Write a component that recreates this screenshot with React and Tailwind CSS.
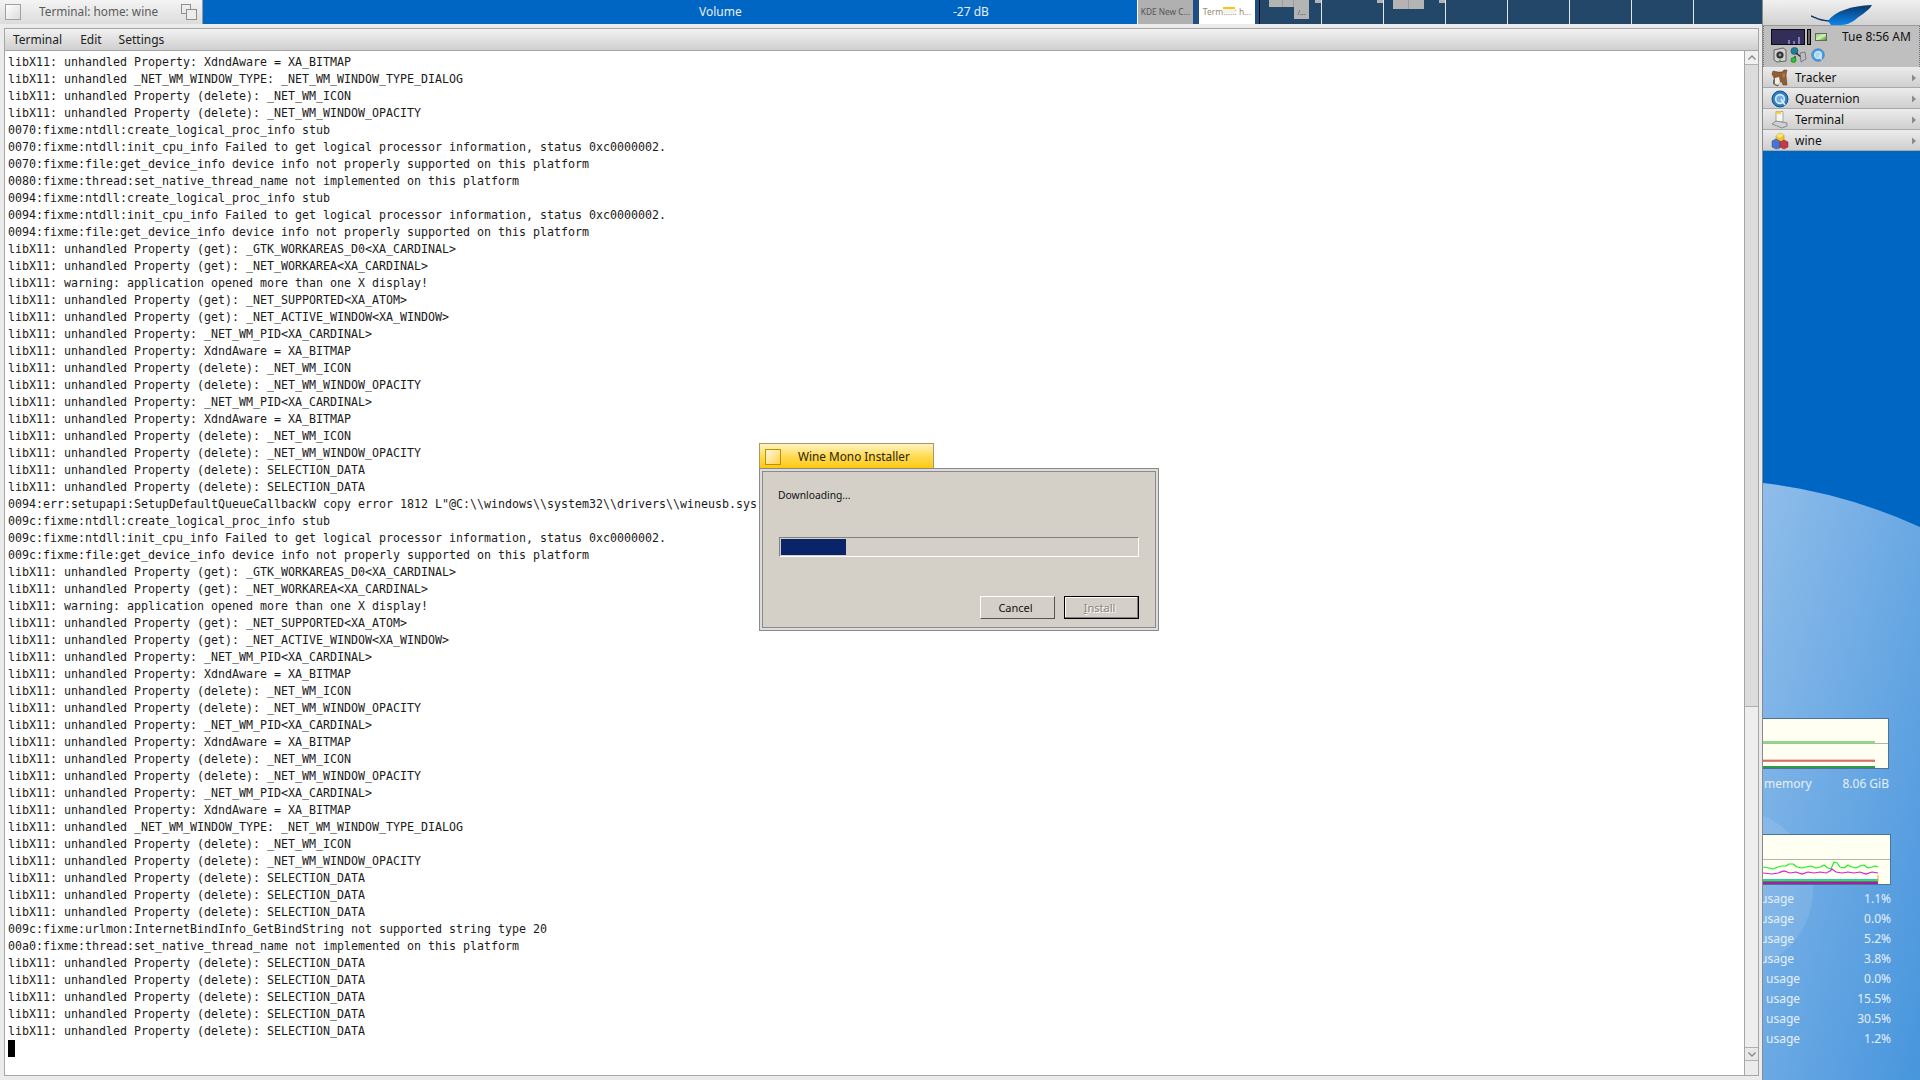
import React from "react";

const LOG = [
  "libX11: unhandled Property: XdndAware = XA_BITMAP",
  "libX11: unhandled _NET_WM_WINDOW_TYPE: _NET_WM_WINDOW_TYPE_DIALOG",
  "libX11: unhandled Property (delete): _NET_WM_ICON",
  "libX11: unhandled Property (delete): _NET_WM_WINDOW_OPACITY",
  "0070:fixme:ntdll:create_logical_proc_info stub",
  "0070:fixme:ntdll:init_cpu_info Failed to get logical processor information, status 0xc0000002.",
  "0070:fixme:file:get_device_info device info not properly supported on this platform",
  "0080:fixme:thread:set_native_thread_name not implemented on this platform",
  "0094:fixme:ntdll:create_logical_proc_info stub",
  "0094:fixme:ntdll:init_cpu_info Failed to get logical processor information, status 0xc0000002.",
  "0094:fixme:file:get_device_info device info not properly supported on this platform",
  "libX11: unhandled Property (get): _GTK_WORKAREAS_D0<XA_CARDINAL>",
  "libX11: unhandled Property (get): _NET_WORKAREA<XA_CARDINAL>",
  "libX11: warning: application opened more than one X display!",
  "libX11: unhandled Property (get): _NET_SUPPORTED<XA_ATOM>",
  "libX11: unhandled Property (get): _NET_ACTIVE_WINDOW<XA_WINDOW>",
  "libX11: unhandled Property: _NET_WM_PID<XA_CARDINAL>",
  "libX11: unhandled Property: XdndAware = XA_BITMAP",
  "libX11: unhandled Property (delete): _NET_WM_ICON",
  "libX11: unhandled Property (delete): _NET_WM_WINDOW_OPACITY",
  "libX11: unhandled Property: _NET_WM_PID<XA_CARDINAL>",
  "libX11: unhandled Property: XdndAware = XA_BITMAP",
  "libX11: unhandled Property (delete): _NET_WM_ICON",
  "libX11: unhandled Property (delete): _NET_WM_WINDOW_OPACITY",
  "libX11: unhandled Property (delete): SELECTION_DATA",
  "libX11: unhandled Property (delete): SELECTION_DATA",
  '0094:err:setupapi:SetupDefaultQueueCallbackW copy error 1812 L"@C:\\\\windows\\\\system32\\\\drivers\\\\wineusb.sys',
  "009c:fixme:ntdll:create_logical_proc_info stub",
  "009c:fixme:ntdll:init_cpu_info Failed to get logical processor information, status 0xc0000002.",
  "009c:fixme:file:get_device_info device info not properly supported on this platform",
  "libX11: unhandled Property (get): _GTK_WORKAREAS_D0<XA_CARDINAL>",
  "libX11: unhandled Property (get): _NET_WORKAREA<XA_CARDINAL>",
  "libX11: warning: application opened more than one X display!",
  "libX11: unhandled Property (get): _NET_SUPPORTED<XA_ATOM>",
  "libX11: unhandled Property (get): _NET_ACTIVE_WINDOW<XA_WINDOW>",
  "libX11: unhandled Property: _NET_WM_PID<XA_CARDINAL>",
  "libX11: unhandled Property: XdndAware = XA_BITMAP",
  "libX11: unhandled Property (delete): _NET_WM_ICON",
  "libX11: unhandled Property (delete): _NET_WM_WINDOW_OPACITY",
  "libX11: unhandled Property: _NET_WM_PID<XA_CARDINAL>",
  "libX11: unhandled Property: XdndAware = XA_BITMAP",
  "libX11: unhandled Property (delete): _NET_WM_ICON",
  "libX11: unhandled Property (delete): _NET_WM_WINDOW_OPACITY",
  "libX11: unhandled Property: _NET_WM_PID<XA_CARDINAL>",
  "libX11: unhandled Property: XdndAware = XA_BITMAP",
  "libX11: unhandled _NET_WM_WINDOW_TYPE: _NET_WM_WINDOW_TYPE_DIALOG",
  "libX11: unhandled Property (delete): _NET_WM_ICON",
  "libX11: unhandled Property (delete): _NET_WM_WINDOW_OPACITY",
  "libX11: unhandled Property (delete): SELECTION_DATA",
  "libX11: unhandled Property (delete): SELECTION_DATA",
  "libX11: unhandled Property (delete): SELECTION_DATA",
  "009c:fixme:urlmon:InternetBindInfo_GetBindString not supported string type 20",
  "00a0:fixme:thread:set_native_thread_name not implemented on this platform",
  "libX11: unhandled Property (delete): SELECTION_DATA",
  "libX11: unhandled Property (delete): SELECTION_DATA",
  "libX11: unhandled Property (delete): SELECTION_DATA",
  "libX11: unhandled Property (delete): SELECTION_DATA",
  "libX11: unhandled Property (delete): SELECTION_DATA",
];

const USAGE = [
  ["-ml-[3px]", "1.1%"],
  ["-ml-[3px]", "0.0%"],
  ["-ml-[3px]", "5.2%"],
  ["-ml-[3px]", "3.8%"],
  ["ml-[3px]", "0.0%"],
  ["ml-[3px]", "15.5%"],
  ["ml-[3px]", "30.5%"],
  ["ml-[3px]", "1.2%"],
];

const Chevron = () => (
  <svg width="6" height="8" viewBox="0 0 6 8" className="shrink-0">
    <path d="M1 0.5 L5 4 L1 7.5 Z" fill="#8a8a8a" />
  </svg>
);

const TrackerIcon = () => (
  <svg width="18" height="18" viewBox="0 0 18 18">
    <path d="M2 2 L7 3 L11 3 L13 1 L16 1 L15 6 L16 16 L12 16 L11 13 L8 13 L7 17 L4 16 L3 9 L1 5 Z" fill="#8f5e36" stroke="#5a3a20" strokeWidth="0.5" />
    <path d="M4 9 L8 8 L9 13 L7 16 L4 15 Z" fill="#f2efe6" />
    <path d="M2 11 L4 10 L4 16 L2 15 Z" fill="#6a6a6a" />
    <path d="M11 5 L14 4 L14 8 L12 9 Z" fill="#b07a48" />
  </svg>
);

const QuaternionIcon = ({ size = 18, light = false }) => (
  <svg width={size} height={size} viewBox="0 0 18 18">
    <circle cx="9" cy="9" r="8" fill={light ? "#4a9ce8" : "#2f7fc4"} stroke={light ? "#2f7fc4" : "#154f88"} />
    <circle cx="9" cy="9" r="4.4" fill={light ? "#a8d4f6" : "#6cb0e4"} stroke="#d8ecfa" strokeWidth="1.6" />
    <path d="M10 9 L14 15" stroke="#d8ecfa" strokeWidth="1.6" />
  </svg>
);

const TerminalIcon = () => (
  <svg width="18" height="18" viewBox="0 0 18 18">
    <path d="M5 0.5 H12 V11 H5 Z" fill="#f4f4f0" stroke="#8a8a8a" strokeWidth="0.7" />
    <rect x="5" y="0.5" width="5" height="2.5" fill="#f4cf3a" />
    <path d="M1 13 L5 10 L16 12 L16 15 L11 17 Z" fill="#d0d0d0" stroke="#6e6e6e" strokeWidth="0.7" />
  </svg>
);

const WineIcon = () => (
  <svg width="18" height="18" viewBox="0 0 18 18">
    <path d="M5 4 L9 1 L13 3 L13 9 L9 11 L5 9 Z" fill="#f2c522" stroke="#a8841a" strokeWidth="0.5" />
    <path d="M5 4 L9 6 L13 3 L9 1 Z" fill="#f9e27a" />
    <path d="M1 9 L5 7 L9 9 L9 16 L5 17 L1 15 Z" fill="#4a74cc" stroke="#2c4a8c" strokeWidth="0.5" />
    <path d="M9 10 L13 8 L17 10 L17 15 L13 17 L9 15 Z" fill="#c43a48" stroke="#7e2430" strokeWidth="0.5" />
  </svg>
);

const SpeakerIcon = () => (
  <svg width="16" height="16" viewBox="0 0 16 16">
    <path d="M2 3 L11 1 L14 3 L14 14 L5 15 L2 13 Z" fill="#d2d2d2" stroke="#4a4a4a" strokeWidth="0.8" />
    <circle cx="8" cy="8" r="3.6" fill="#333" />
    <circle cx="8" cy="8" r="1.4" fill="#9a9a9a" />
    <circle cx="8" cy="13.5" r="1" fill="#3fb34a" />
  </svg>
);

const NetworkIcon = () => (
  <svg width="17" height="16" viewBox="0 0 17 16">
    <circle cx="4.5" cy="4" r="3.6" fill="#1f7f96" stroke="#10485a" strokeWidth="0.5" />
    <path d="M6 6 L11 10 M5 9 L5 12" stroke="#222" strokeWidth="1.2" />
    <circle cx="3.5" cy="13" r="2.6" fill="#2ec12e" stroke="#146c14" strokeWidth="0.5" />
    <path d="M10 6 L15 5 L16 12 L11 15 Z" fill="#b9bec4" stroke="#4b5056" strokeWidth="0.6" />
  </svg>
);

const MenuRow = ({ icon, label }) => (
  <div className="flex h-[21px] items-center border-b border-[#a8a8a8] bg-gradient-to-b from-[#ececec] to-[#cfcfcf] pl-[8px] pr-[3px] pt-[1px]">
    <span className="flex w-[24px] shrink-0 items-center">{icon}</span>
    <span className="flex-1 text-[12px] text-[#111]">{label}</span>
    <Chevron />
  </div>
);

const PagerDesk = ({ children, className = "w-[62px]" }) => (
  <div className={`relative h-full shrink-0 border-r border-[#dfe6ec] bg-[#234769] ${className}`}>{children}</div>
);

const MemoryGraph = () => (
  <svg width="126" height="51" viewBox="-1 0 126 51" className="block">
    <rect x="-3" y="0.5" width="127.5" height="50" fill="#fffff2" stroke="#4d7396" />
    <path d="M-1 25.5 H124" stroke="#b5b5ad" />
    <path d="M-1 24 H111" stroke="#1fb51f" />
    <path d="M-1 25 H111" stroke="#86d886" />
    <path d="M-1 42 H111" stroke="#e8968c" />
    <path d="M-1 43 H111" stroke="#c40f0f" />
    <rect x="-1" y="48" width="112" height="2" fill="#2f9a4a" />
  </svg>
);

const CpuGraph = () => (
  <svg width="128" height="51" viewBox="-1 0 128 51" className="block">
    <rect x="-3" y="0.5" width="129.5" height="50" fill="#fffff2" stroke="#4d7396" />
    <path d="M-1 25.5 H126" stroke="#b5b5ad" />
    <path
      d="M-1 33 L5 34 L9 35 L14 33 L18 32 L22 32 L25 30 L29 30 L33 33 L38 34 L42 33 L47 32 L52 34 L56 33 L60 31 L64 34 L67 35 L70 28 L73 29 L76 33 L80 34 L84 31 L88 33 L92 34 L96 32 L100 31 L104 34 L108 33 L111 32 L114 33"
      fill="none"
      stroke="#19f01f"
      strokeWidth="1.2"
      strokeLinejoin="round"
    />
    <path
      d="M-1 39 L8 40 L14 39 L20 37 L26 39 L32 38 L38 40 L44 38 L50 39 L56 38 L62 39 L66 37 L68 35 L72 38 L78 39 L84 38 L90 39 L96 38 L102 40 L108 38 L114 39"
      fill="none"
      stroke="#d81fd8"
      strokeWidth="1.2"
    />
    <rect x="-1" y="45" width="115" height="1.5" fill="#2dc7b5" />
    <rect x="-1" y="46.5" width="115" height="1.5" fill="#2f9a4a" />
    <rect x="-1" y="48" width="115" height="2" fill="#a21fa8" />
    <path d="M114 48 V41" stroke="#f0a030" />
  </svg>
);

const Wallpaper = () => (
  <svg width="157" height="1080" viewBox="0 0 157 1080" className="absolute inset-0">
    <defs>
      <linearGradient id="wallGrad" x1="0" y1="0" x2="1" y2="1">
        <stop offset="0" stopColor="#8fbdea" />
        <stop offset="1" stopColor="#4795dd" />
      </linearGradient>
    </defs>
    <rect width="157" height="1080" fill="#0066c4" />
    <path d="M0 483 Q80 492 157 527 V1080 H0 Z" fill="url(#wallGrad)" />
    <circle cx="-30" cy="890" r="80" fill="#ffffff" fillOpacity="0.1" />
  </svg>
);

const Win95Button = ({ children, disabled }) => (
  <div
    className={`flex h-[23px] w-[75px] items-center justify-center pr-[4px] pt-[1px] text-[11px] ${
      disabled
        ? "border border-black text-[#8a867e] [text-shadow:1px_1px_0_#ffffff] shadow-[inset_-1px_-1px_0_#808080,inset_1px_1px_0_#ffffff]"
        : "border-t border-l border-t-white border-l-white border-r border-b border-r-[#555] border-b-[#555] text-[#111]"
    }`}
  >
    {children}
  </div>
);

const Dialog = () => (
  <div className="absolute left-[759px] top-[443px] flex w-[400px] flex-col font-['Noto_Sans',sans-serif]">
    <div className="flex h-[25px] w-[175px] items-center border border-b-0 border-[#a89868] bg-gradient-to-b from-[#fff3c0] via-[#ffdc50] to-[#ffc800] pl-[5px] pt-[1px]">
      <span className="h-[16px] w-[16px] border border-[#c09000] bg-gradient-to-br from-[#fff8dc] to-[#ffd23c]" />
      <span className="ml-[17px] text-[11.8px] text-[#2b2410]">Wine Mono Installer</span>
    </div>
    <div className="h-[163px] border border-[#8a8a8a] bg-[#dcdcdc] p-[2px]">
      <div className="flex h-full flex-col border border-[#8a8a8a] bg-[#d4d0c8] pl-[15px] pr-[16px]">
        <span className="mt-[15px] text-[10.3px] leading-[16px] text-[#111]">Downloading...</span>
        <div className="ml-[1px] mt-[34px] h-[20px] w-[360px] border-t border-l border-[#808080] border-r-white border-b-white border-r border-b p-[1px]">
          <div className="h-full w-[65px] bg-[#0a246a]" />
        </div>
        <div className="mt-[39px] flex justify-end gap-[9px]">
          <Win95Button>Cancel</Win95Button>
          <Win95Button disabled><span className="underline">I</span>nstall</Win95Button>
        </div>
      </div>
    </div>
  </div>
);

const App = () => (
  <div className="relative flex h-[1080px] w-[1920px] overflow-hidden bg-[#e6e6e6] font-['Noto_Sans',sans-serif]">
    {/* terminal side */}
    <div className="flex w-[1762px] shrink-0 flex-col">
      <div className="flex h-[24px] shrink-0 items-stretch bg-[#0066c4]">
        <div className="flex w-[203px] items-center border-r border-[#9a9a9a] bg-gradient-to-b from-[#f4f4f4] to-[#dcdcdc] pl-[5px] pr-[5px]">
          <span className="h-[16px] w-[16px] border border-[#a0a0a0] bg-gradient-to-br from-white to-[#dcdcdc]" />
          <span className="ml-[18px] flex-1 text-[11.8px] text-[#5a5a5a]">Terminal: home: wine</span>
          <svg width="16" height="16" viewBox="0 0 16 16">
            <rect x="0.5" y="0.5" width="9" height="9" fill="none" stroke="#8e8e8e" />
            <rect x="5.5" y="5.5" width="10" height="10" fill="#ececec" stroke="#8e8e8e" />
          </svg>
        </div>
        <div className="w-[934px] text-[12px] leading-[23px] text-[#e6f0fa]">
          <div className="flex">
            <span className="ml-[496px] w-[254px]">Volume</span>
            <span>-27 dB</span>
          </div>
        </div>
        <div className="flex w-[56px] items-center justify-center truncate border-l border-white bg-[#b0b0b0] text-[8.3px] text-[#555]">KDE New C...</div>
        <div className="w-[6px] bg-[#1d4f86]" />
        <div className="relative flex w-[56px] items-center justify-center truncate bg-white text-[8.5px] text-[#9a8a70]">
          Term.....: h...
          <span className="absolute left-[24px] top-[7px] h-[6px] w-[12px] border-t-2 border-[#ffc800] bg-[#f2f2f2]" />
        </div>
        <div className="w-[5px] border-r border-black bg-[#1d4f86]" />
        <div className="flex flex-1">
          <PagerDesk>
            <div className="absolute left-[9px] top-0 h-[7px] w-[14px] border-r border-[#9c9c9c] bg-[#b4b4b4]" />
            <div className="absolute left-[23px] top-0 h-[7px] w-[11px] border-r border-[#9c9c9c] bg-[#b4b4b4]" />
            <div className="absolute left-[34px] top-0 flex h-[19px] w-[15px] items-end justify-center bg-[#b4b4b4] pb-[1px] text-[7px] text-[#555]">/...</div>
            <div className="absolute right-0 top-0 h-[3px] w-[6px] bg-[#b4b4b4]" />
          </PagerDesk>
          <PagerDesk>
            <div className="absolute right-0 top-0 h-[3px] w-[6px] bg-[#b4b4b4]" />
          </PagerDesk>
          <PagerDesk>
            <div className="absolute left-[9px] top-0 h-[9px] w-[16px] border-r border-[#9c9c9c] bg-[#b4b4b4]" />
            <div className="absolute left-[25px] top-0 h-[9px] w-[15px] bg-[#b4b4b4]" />
            <div className="absolute right-0 top-0 h-[3px] w-[6px] bg-[#b4b4b4]" />
          </PagerDesk>
          <PagerDesk />
          <PagerDesk />
          <PagerDesk />
          <PagerDesk />
          <PagerDesk className="flex-1 border-r-0" />
        </div>
      </div>
      {/* window frame */}
      <div className="flex flex-1 flex-col bg-[#ebebeb] pb-[4px] pl-[4px] pr-[3px] pt-[4px]">
        <div className="flex h-[23px] shrink-0 items-center border border-[#a6a6a6] bg-gradient-to-b from-[#f2f2f2] to-[#cfcfcf] pl-[8px] text-[12px] text-[#222]">
          <span>Terminal</span>
          <span className="ml-[18px]">Edit</span>
          <span className="ml-[17px]">Settings</span>
        </div>
        <div className="flex min-h-0 flex-1 border-x border-b border-[#a6a6a6]">
          <div className="flex-1 overflow-hidden bg-white pl-[3px] pt-[3px] font-['DejaVu_Sans_Mono',monospace] text-[11.63px] leading-[17px] text-[#1a1a1a]">
            {LOG.map((line, i) => (
              <div key={i} className="h-[17px] whitespace-pre">{line}</div>
            ))}
            <div className="h-[17px] w-[7px] bg-black" />
          </div>
          <div className="flex w-[14px] shrink-0 flex-col border-l border-[#a6a6a6] bg-[#ececec]">
            <div className="flex h-[14px] items-center justify-center border-b border-[#b0b0b0] bg-[#f0f0f0]">
              <svg width="8" height="5" viewBox="0 0 8 5"><path d="M0.5 4.5 L4 1 L7.5 4.5" fill="none" stroke="#8a8a8a" strokeWidth="1.4" /></svg>
            </div>
            <div className="h-[641px] bg-[#dcdcdc]" />
            <div className="flex-1 border-t border-[#b0b0b0] bg-[#eeeeee]" />
            <div className="flex h-[14px] items-center justify-center border-y border-[#b0b0b0] bg-[#e8e8e8]">
              <svg width="8" height="5" viewBox="0 0 8 5"><path d="M0.5 0.5 L4 4 L7.5 0.5" fill="none" stroke="#8a8a8a" strokeWidth="1.4" /></svg>
            </div>
            <div className="h-[14px]" />
          </div>
        </div>
      </div>
    </div>

    {/* right side panel on the desktop */}
    <div className="relative flex w-[158px] shrink-0 flex-col overflow-hidden border-l border-[#8a8a8a]">
      <Wallpaper />
      <div className="relative flex h-[26px] items-end border-b border-[#9a9a9a] bg-gradient-to-b from-[#f0f0f0] to-[#d2d2d2] pl-[48px]">
        <svg width="62" height="20" viewBox="0 0 62 20" className="block">
          <defs>
            <linearGradient id="featherGrad" x1="0" y1="0" x2="0" y2="1">
              <stop offset="0" stopColor="#0a3565" />
              <stop offset="1" stopColor="#0a86ee" />
            </linearGradient>
          </defs>
          <path d="M0 11 C5 13 10 16 18 16" fill="none" stroke="#0a3565" strokeWidth="1.4" />
          <path d="M17 16 C24 6 40 1 61 0 C59 4 55 6 52 9 C49 11 46 13 44 15 C40 18 35 20 29 20 L20 20 Z" fill="url(#featherGrad)" />
        </svg>
      </div>
      <div className="relative h-[41px] border-x border-dotted border-[#777] bg-[#bfbfbf] pl-[7px]">
        <div className="flex h-[19px] items-center pt-[3px]">
          <svg width="34" height="16" viewBox="0 0 34 16" className="shrink-0">
            <rect width="34" height="16" fill="#0c0c0c" />
            <rect x="1" y="1" width="32" height="14" fill="#322e58" />
            <rect x="17" y="11" width="2" height="4" fill="#7d7ac0" />
            <rect x="22" y="12" width="2" height="3" fill="#7d7ac0" />
            <rect x="27" y="8" width="2" height="7" fill="#7d7ac0" />
          </svg>
          <span className="ml-[2px] h-[16px] w-[4px] border border-black bg-[#666]" />
          <span className="ml-[4px] h-[8px] w-[12px] border border-[#666] bg-gradient-to-br from-[#7ad36a] via-[#d8f0b0] to-[#2c9a2c]" />
          <span className="ml-[15px] text-[12px] text-[#111]">Tue 8:56 AM</span>
        </div>
        <div className="flex items-center gap-[2px] pl-[1px] pt-[2px]">
          <SpeakerIcon />
          <NetworkIcon />
          <span className="ml-[2px]"><QuaternionIcon size={14} light /></span>
        </div>
      </div>
      <div className="relative">
        <MenuRow icon={<TrackerIcon />} label="Tracker" />
        <MenuRow icon={<QuaternionIcon />} label="Quaternion" />
        <MenuRow icon={<TerminalIcon />} label="Terminal" />
        <MenuRow icon={<WineIcon />} label="wine" />
      </div>
      <div className="relative mt-[567px] flex flex-col text-[12px] text-[#e6f0fa]">
        <MemoryGraph />
        <div className="mt-[6px] flex w-[126px] justify-between leading-[18px]">
          <span className="ml-[1px]">memory</span>
          <span>8.06 GiB</span>
        </div>
        <div className="mt-[41px]"><CpuGraph /></div>
        <div className="mt-[4px] flex w-[128px] flex-col">
          {USAGE.map(([offset, value], i) => (
            <div key={i} className="flex h-[20px] items-center justify-between">
              <span className={offset}>usage</span>
              <span>{value}</span>
            </div>
          ))}
        </div>
      </div>
    </div>

    <Dialog />
  </div>
);

export default App;
